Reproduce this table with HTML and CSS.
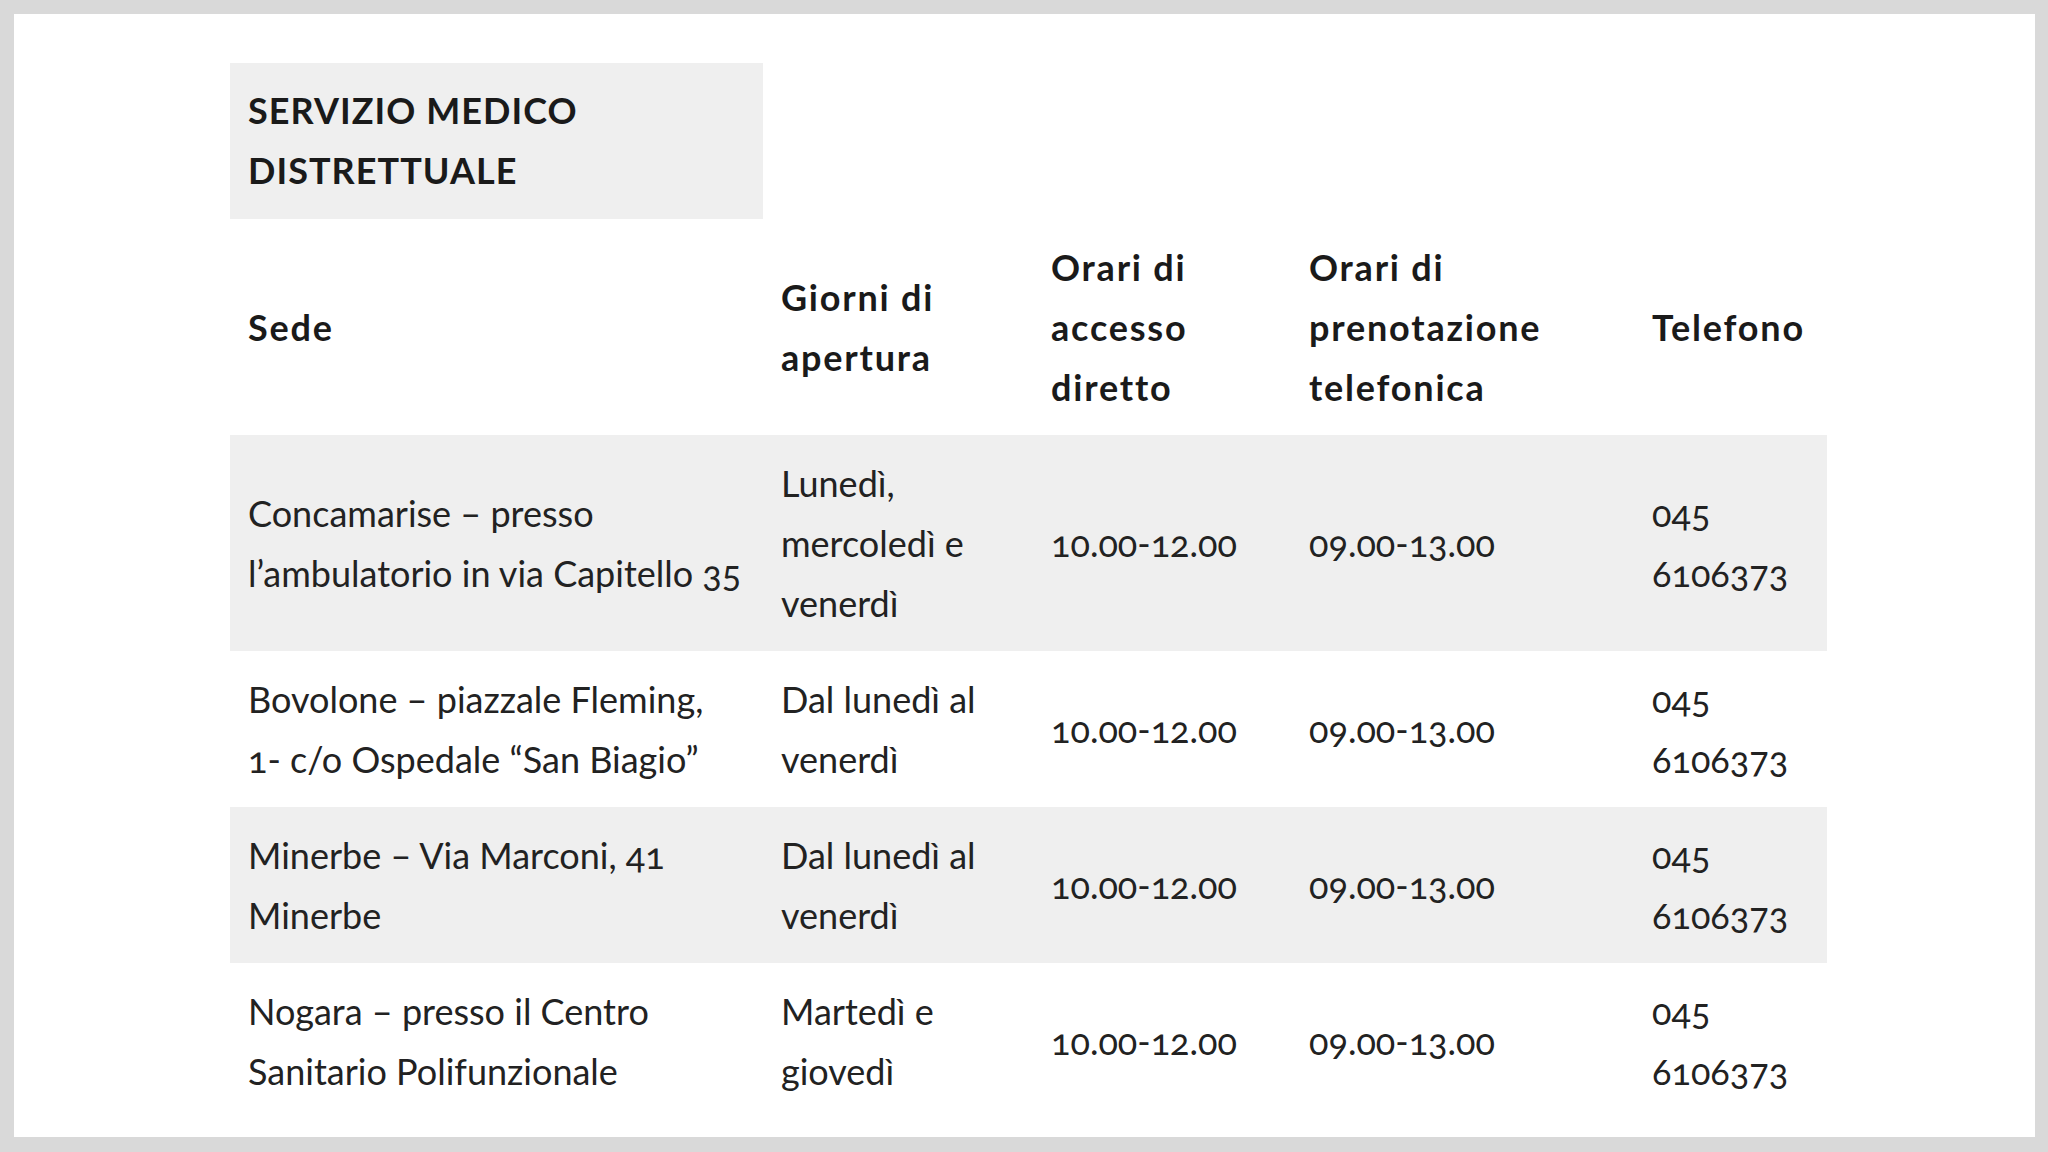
FILE: index.html
```html
<!DOCTYPE html>
<html lang="it">
<head>
<meta charset="utf-8">
<title>Servizio medico distrettuale</title>
<link rel="stylesheet" href="styles.css">
</head>
<body>
<div class="frame">
  <table class="orari">
    <colgroup>
      <col class="c-sede">
      <col class="c-giorni">
      <col class="c-accesso">
      <col class="c-pren">
      <col class="c-tel">
    </colgroup>
    <thead>
      <tr class="title-row">
        <th class="title">SERVIZIO MEDICO<br>DISTRETTUALE</th>
        <th></th><th></th><th></th><th></th>
      </tr>
      <tr class="head-row">
        <th>Sede</th>
        <th>Giorni di<br>apertura</th>
        <th>Orari di<br>accesso<br>diretto</th>
        <th>Orari di<br>prenotazione<br>telefonica</th>
        <th>Telefono</th>
      </tr>
    </thead>
    <tbody>
      <tr class="alt">
        <td>Concamarise – presso<br>l’ambulatorio in via Capitello 35</td>
        <td>Lunedì,<br>mercoledì e<br>venerdì</td>
        <td>10.00-12.00</td>
        <td>09.00-13.00</td>
        <td>045<br>6106373</td>
      </tr>
      <tr>
        <td>Bovolone – piazzale Fleming,<br>1- c/o Ospedale “San Biagio”</td>
        <td>Dal lunedì al<br>venerdì</td>
        <td>10.00-12.00</td>
        <td>09.00-13.00</td>
        <td>045<br>6106373</td>
      </tr>
      <tr class="alt">
        <td>Minerbe – Via Marconi, 41<br>Minerbe</td>
        <td>Dal lunedì al<br>venerdì</td>
        <td>10.00-12.00</td>
        <td>09.00-13.00</td>
        <td>045<br>6106373</td>
      </tr>
      <tr>
        <td>Nogara – presso il Centro<br>Sanitario Polifunzionale</td>
        <td>Martedì e<br>giovedì</td>
        <td>10.00-12.00</td>
        <td>09.00-13.00</td>
        <td>045<br>6106373</td>
      </tr>
    </tbody>
  </table>
</div>
</body>
</html>
```

FILE: styles.css
```css
html, body {
  margin: 0;
  padding: 0;
  background: #d9d9d9;
}

.frame {
  box-sizing: border-box;
  margin: 14px 13px 0 14px;
  height: 1123px;
  background: #ffffff;
  overflow: hidden;
  padding: 49px 0 0 216px;
}

.orari {
  border-collapse: collapse;
  table-layout: fixed;
  width: 1597px;
  font-family: "Lato", "Open Sans", sans-serif;
  color: #1a1a1a;
  font-size: 36px;
  line-height: 60px;
}

.c-sede { width: 533px; }
.c-giorni { width: 270px; }
.c-accesso { width: 258px; }
.c-pren { width: 343px; }
.c-tel { width: 193px; }

.orari th,
.orari td {
  padding: 18px 18px;
  text-align: left;
  vertical-align: middle;
  white-space: nowrap;
}

.orari th {
  font-weight: 700;
  letter-spacing: 1.8px;
}

.title-row th {
  padding-top: 17px;
  padding-bottom: 19px;
}

.title-row .title {
  background: #efefef;
  letter-spacing: 1.05px;
}

.orari td {
  font-weight: 400;
  letter-spacing: 0;
  color: #222222;
  font-variant-numeric: oldstyle-nums;
}

.orari tr.alt td {
  background: #efefef;
}
```
